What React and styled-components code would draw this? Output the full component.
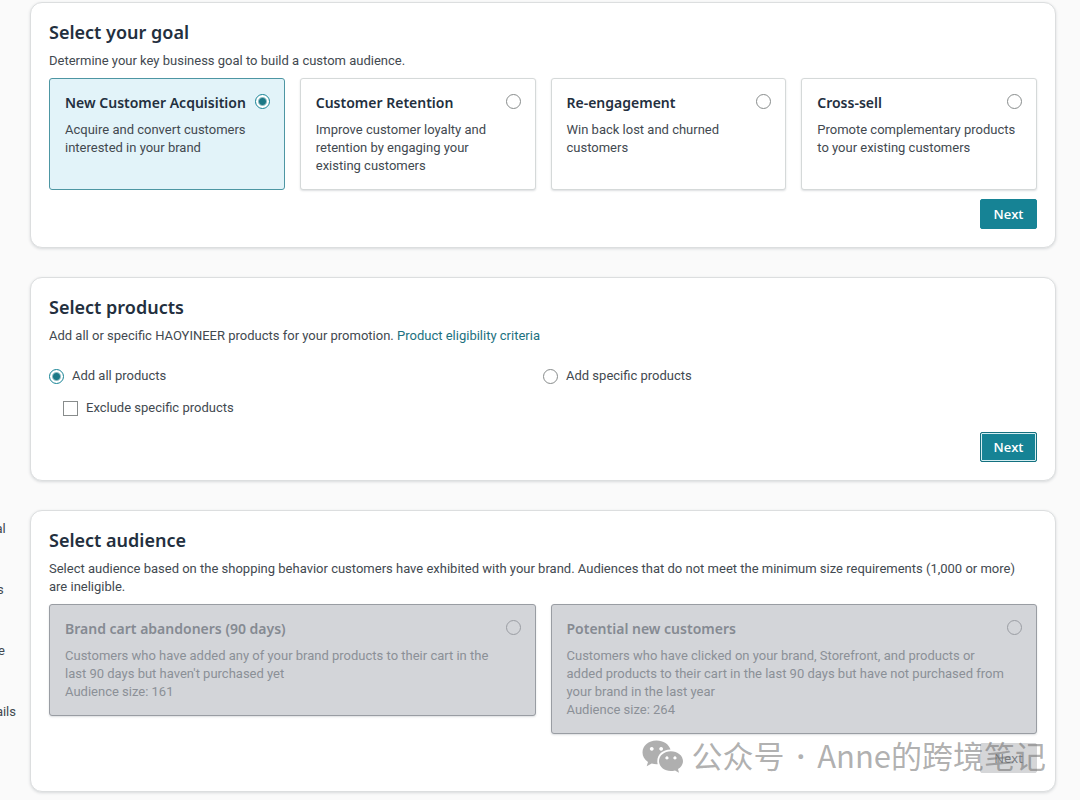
import React, { useState } from "react";
import styled, { createGlobalStyle, css } from "styled-components";

const teal = "#168395";
const ink = "#232f3e";

const GlobalStyle = createGlobalStyle`
  * {
    box-sizing: border-box;
  }

  body {
    margin: 0;
    background: #fafafa;
    color: #424950;
    font-family: Roboto, "Noto Sans", "Noto Sans CJK SC", sans-serif;
    font-size: 13px;
    line-height: 18px;
  }
`;

const Page = styled.div`
  position: relative;
  display: grid;
  grid-template-columns: 16px minmax(0, 1fr);
  column-gap: 14px;
  padding: 2px 24px 7px 0;
`;

const Steps = styled.nav`
  display: flex;
  justify-content: flex-end;
  overflow: hidden;
  padding-top: 518px;
`;

const StepList = styled.ol`
  display: flex;
  flex: none;
  flex-direction: column;
  gap: 43px;
  margin: 0;
  padding: 0;
  list-style: none;
  white-space: nowrap;
`;

const Main = styled.main`
  display: flex;
  flex-direction: column;
  gap: 29px;
`;

const Panel = styled.section`
  display: flex;
  flex-direction: column;
  padding: 17px 18px 18px;
  border: 1px solid #dcdedf;
  border-radius: 12px;
  background: #fff;
  box-shadow: 0 1px 3px rgba(35, 47, 62, 0.16);
`;

const Heading = styled.h2`
  margin: 0 0 8px;
  color: ${ink};
  font-family: "Noto Sans", sans-serif;
  font-size: 18px;
  font-weight: 600;
  line-height: 24px;
`;

const Intro = styled.p`
  margin: 0;
`;

const Link = styled.a`
  color: #1c7180;
  text-decoration: none;
`;

const Radio = styled.input.attrs({ type: "radio" })`
  appearance: none;
  flex: none;
  width: 15px;
  height: 15px;
  margin: 0;
  border: 1px solid #888c8c;
  border-radius: 50%;
  background: #fff;

  &:checked {
    border-color: ${teal};
    background: radial-gradient(circle, #1c7886 3px, #fff 5px);
  }

  &:disabled {
    border-color: #9a9da3;
    background: transparent;
  }
`;

const Checkbox = styled.input.attrs({ type: "checkbox" })`
  flex: none;
  appearance: none;
  width: 15px;
  height: 15px;
  margin: 0;
  border: 1px solid #888c8c;
  background: #fff;

  &:checked {
    background: ${teal};
  }
`;

const Cards = styled.div`
  display: grid;
  grid-template-columns: repeat(${p => p.$columns}, minmax(0, 1fr));
  align-items: start;
  gap: 15px;
  margin: 8px 0 9px;
`;

const CardBox = styled.label`
  display: flex;
  flex-direction: column;
  gap: 7px;
  min-height: 112px;
  padding: 13px 14px 14px 15px;
  border: 1px solid #d5d9d9;
  border-radius: 3px;
  background: #fff;
  box-shadow: 0 1px 2px rgba(35, 47, 62, 0.16);

  ${p =>
    p.$selected &&
    css`
      border-color: #4d96a3;
      background: #e2f3f9;
      box-shadow: none;
    `}

  ${p =>
    p.$disabled &&
    css`
      border-color: #999da3;
      background: #d3d5d9;
      color: #8b9097;
    `}
`;

const CardTop = styled.span`
  display: flex;
  align-items: flex-start;
  justify-content: space-between;

  ${Radio} {
    margin-top: 2px;
  }
`;

const CardTitle = styled.span`
  color: ${p => (p.$disabled ? "#858a92" : ink)};
  font-family: "Noto Sans", sans-serif;
  font-size: 14px;
  font-weight: 600;
  line-height: 22px;
  white-space: nowrap;
`;

const CardText = styled.span`
  display: block;
  white-space: pre-line;
`;

const Choices = styled.div`
  display: grid;
  grid-template-columns: 1fr 1fr;
  row-gap: 14px;
  margin: 22px 0 15px;
`;

const Choice = styled.label`
  display: flex;
  align-items: center;
  gap: 8px;
  padding-left: ${p => (p.$nested ? "14px" : "0")};
`;

const Button = styled.button`
  align-self: flex-end;
  width: 57px;
  height: 30px;
  padding: 0;
  border: 1px solid ${teal};
  border-radius: 2px;
  background: ${teal};
  color: #fff;
  font: 600 13px/18px "Open Sans", sans-serif;

  ${p =>
    p.$ring &&
    css`
      border-color: #14707f;
      box-shadow: inset 0 0 0 1px #d5eef2;
    `}

  &:disabled {
    border-color: #d5d6d8;
    background: #d5d6d8;
    color: #777b80;
    font-weight: 400;
  }
`;

const Signature = styled.div`
  position: absolute;
  right: 34px;
  bottom: 20px;
  display: flex;
  align-items: center;
  gap: 8px;
  color: rgba(110, 110, 110, 0.55);
  font: 400 31px/46px "Noto Sans CJK SC", sans-serif;
  white-space: nowrap;
  pointer-events: none;
`;

const Dot = styled.span`
  margin: 0 12px;
  font-family: "Noto Sans", sans-serif;
  font-weight: 600;
`;

const steps = [
  "Select your goal",
  "Select products",
  "Select audience",
  "Promotion details"
];

const goals = [
  {
    title: "New Customer Acquisition",
    text: "Acquire and convert customers\ninterested in your brand"
  },
  {
    title: "Customer Retention",
    text:
      "Improve customer loyalty and\nretention by engaging your\nexisting customers"
  },
  {
    title: "Re-engagement",
    text: "Win back lost and churned\ncustomers"
  },
  {
    title: "Cross-sell",
    text: "Promote complementary products\nto your existing customers"
  }
];

const audiences = [
  {
    title: "Brand cart abandoners (90 days)",
    text:
      "Customers who have added any of your brand products to their cart in the\nlast 90 days but haven't purchased yet",
    size: 161
  },
  {
    title: "Potential new customers",
    text:
      "Customers who have clicked on your brand, Storefront, and products or\nadded products to their cart in the last 90 days but have not purchased from\nyour brand in the last year",
    size: 264
  }
];

const Card = ({ title, text, size, name, selected, disabled, onSelect }) => (
  <CardBox $selected={selected} $disabled={disabled}>
    <CardTop>
      <CardTitle $disabled={disabled}>{title}</CardTitle>
      <Radio
        name={name}
        checked={!!selected}
        disabled={disabled}
        onChange={onSelect}
      />
    </CardTop>
    <span>
      <CardText>{text}</CardText>
      {size && <CardText>Audience size: {size}</CardText>}
    </span>
  </CardBox>
);

const ChatBubbles = () => (
  <svg width="42" height="34" viewBox="0 0 42 34" aria-hidden="true">
    <path
      fill="currentColor"
      fillRule="evenodd"
      d="M14.500 1.500C6.500 1.500 0.500 6.700 0.500 13.400C0.500 17.300 2.500 20.600 6 22.900L4.700 27.200L9.700 24.500C11.500 25 13.500 25.300 15.700 25.200C13.600 17.300 19.800 10.500 28.500 10.600C27 5.200 21.300 1.500 14.500 1.500ZM9.800 7.900A1.900 1.900 0 1 1 9.700 7.900ZM19.200 7.900A1.900 1.900 0 1 1 19.100 7.900Z"
    />
    <path
      fill="currentColor"
      fillRule="evenodd"
      d="M28.800 12.200C22.200 12.200 17 16.600 17 22.100C17 27.700 22.200 32 28.800 32C30.300 32 31.700 31.800 33 31.400L37 33.800L36 30.100C39.100 28.200 41 25.400 41 22.100C41 16.600 35.600 12.200 28.800 12.200ZM25 17.300A1.600 1.600 0 1 1 24.900 17.300ZM33 17.300A1.600 1.600 0 1 1 32.900 17.300Z"
    />
  </svg>
);

export default () => {
  const [goal, setGoal] = useState(0);
  const [scope, setScope] = useState("all");

  return (
    <Page>
      <GlobalStyle />
      <Steps>
        <StepList>
          {steps.map(step => (
            <li key={step}>{step}</li>
          ))}
        </StepList>
      </Steps>
      <Main>
        <Panel>
          <Heading>Select your goal</Heading>
          <Intro>
            Determine your key business goal to build a custom audience.
          </Intro>
          <Cards $columns={4}>
            {goals.map((item, i) => (
              <Card
                key={item.title}
                {...item}
                name="goal"
                selected={goal === i}
                onSelect={() => setGoal(i)}
              />
            ))}
          </Cards>
          <Button type="button">Next</Button>
        </Panel>

        <Panel>
          <Heading>Select products</Heading>
          <Intro>
            Add all or specific HAOYINEER products for your promotion.{" "}
            <Link href="#criteria">Product eligibility criteria</Link>
          </Intro>
          <Choices>
            <Choice>
              <Radio
                name="scope"
                checked={scope === "all"}
                onChange={() => setScope("all")}
              />
              Add all products
            </Choice>
            <Choice>
              <Radio
                name="scope"
                checked={scope === "specific"}
                onChange={() => setScope("specific")}
              />
              Add specific products
            </Choice>
            <Choice $nested>
              <Checkbox name="exclude" />
              Exclude specific products
            </Choice>
          </Choices>
          <Button type="button" $ring>
            Next
          </Button>
        </Panel>

        <Panel>
          <Heading>Select audience</Heading>
          <Intro>
            Select audience based on the shopping behavior customers have
            exhibited with your brand. Audiences that do not meet the minimum
            size requirements (1,000 or more)
            <br />
            are ineligible.
          </Intro>
          <Cards $columns={2}>
            {audiences.map(item => (
              <Card key={item.title} {...item} name="audience" disabled />
            ))}
          </Cards>
          <Button type="button" disabled>
            Next
          </Button>
        </Panel>
      </Main>
      <Signature>
        <ChatBubbles />
        <span>
          公众号<Dot>·</Dot>Anne的跨境笔记
        </span>
      </Signature>
    </Page>
  );
};
